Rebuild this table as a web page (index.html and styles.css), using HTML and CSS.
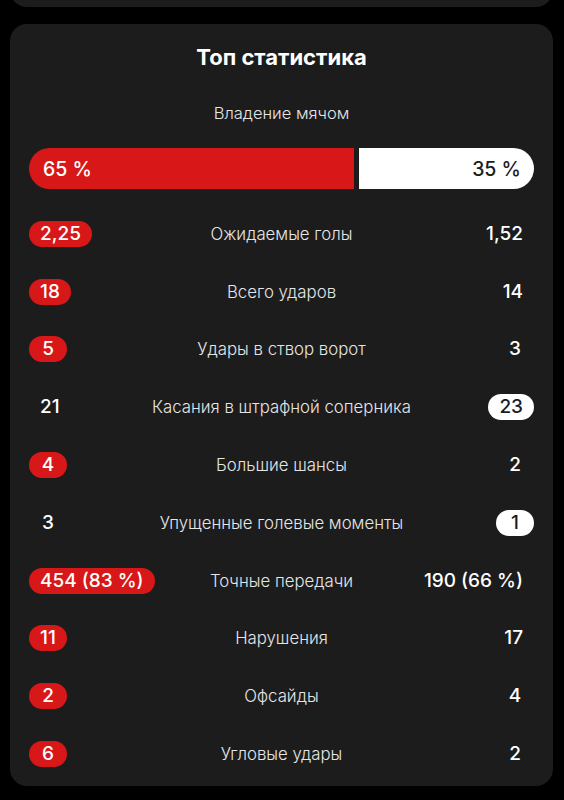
FILE: index.html
```html
<!DOCTYPE html>
<html lang="ru">
<head>
    <meta charset="UTF-8">
    <meta name="viewport" content="width=device-width, initial-scale=1.0">
    <title>Топ статистика</title>
    <link rel="stylesheet" href="styles.css">
</head>
<body>
    <div class="page">
        <!-- previous card, mostly scrolled away -->
        <div class="card prev-card"></div>

        <div class="card stats">
            <h2 class="title">Топ статистика</h2>

            <div class="possession-label">Владение мячом</div>
            <div class="possession">
                <div class="side home" style="flex-grow: 65"><span>65 %</span></div>
                <div class="side away" style="flex-grow: 35"><span>35 %</span></div>
            </div>

            <div class="row">
                <span class="val home win">2,25</span>
                <span class="label">Ожидаемые голы</span>
                <span class="val away">1,52</span>
            </div>
            <div class="row">
                <span class="val home win">18</span>
                <span class="label">Всего ударов</span>
                <span class="val away">14</span>
            </div>
            <div class="row">
                <span class="val home win">5</span>
                <span class="label">Удары в створ ворот</span>
                <span class="val away">3</span>
            </div>
            <div class="row">
                <span class="val home">21</span>
                <span class="label">Касания в штрафной соперника</span>
                <span class="val away win">23</span>
            </div>
            <div class="row">
                <span class="val home win">4</span>
                <span class="label">Большие шансы</span>
                <span class="val away">2</span>
            </div>
            <div class="row">
                <span class="val home">3</span>
                <span class="label">Упущенные голевые моменты</span>
                <span class="val away win">1</span>
            </div>
            <div class="row">
                <span class="val home win">454 (83 %)</span>
                <span class="label">Точные передачи</span>
                <span class="val away">190 (66 %)</span>
            </div>
            <div class="row">
                <span class="val home win">11</span>
                <span class="label">Нарушения</span>
                <span class="val away">17</span>
            </div>
            <div class="row">
                <span class="val home win">2</span>
                <span class="label">Офсайды</span>
                <span class="val away">4</span>
            </div>
            <div class="row">
                <span class="val home win">6</span>
                <span class="label">Угловые удары</span>
                <span class="val away">2</span>
            </div>
        </div>
    </div>
</body>
</html>
```

FILE: styles.css
```css
body {
    margin: 0;
    background-color: #000;
    font-family: Inter, "Noto Sans", sans-serif;
    color: #fff;
}

.page {
    padding: 0 11px 0 10px;
}

.card {
    background-color: #1c1c1d;
    border-radius: 17px;
}

.prev-card {
    height: 40px;
    margin-top: -33px;
    margin-bottom: 17px;
}

.stats {
    padding: 20px 19px 3px 19px;
}

.title {
    margin: 0;
    font-size: 22px;
    line-height: 26px;
    font-weight: 700;
    text-align: center;
}

.possession-label {
    margin-top: 33px;
    font-size: 16.5px;
    line-height: 20px;
    font-weight: 300;
    text-align: center;
    color: #e6e6e6;
}

.possession {
    display: flex;
    gap: 5px;
    margin-top: 25px;
    margin-bottom: 16px;
    height: 41px;
}

.possession .side {
    flex-basis: 0;
    min-width: 0;
    display: flex;
    align-items: center;
    font-size: 19.5px;
    font-weight: 500;
}

.possession .home {
    background-color: #d81818;
    border-radius: 21px 0 0 21px;
}

.possession .home span {
    margin-left: 14px;
}

.possession .away {
    background-color: #fff;
    color: #1c1c1d;
    border-radius: 0 21px 21px 0;
    justify-content: flex-end;
}

.possession .away span {
    margin-right: 13px;
}

/* one stat row: home value, label, away value */
.row {
    display: grid;
    grid-template-columns: 1fr auto 1fr;
    align-items: center;
    height: 57.8px;
}

.label {
    font-size: 16.8px;
    font-weight: 300;
    color: #e6e6e6;
    text-align: center;
}

.val {
    min-width: 38px;
    box-sizing: border-box;
    padding: 0 11px;
    height: 26px;
    line-height: 26px;
    border-radius: 13px;
    font-size: 19px;
    font-weight: 500;
    text-align: center;
}

.val.home {
    justify-self: start;
}

.val.away {
    justify-self: end;
}

.val.home.win {
    background-color: #d81818;
}

.val.away.win {
    background-color: #fff;
    color: #1c1c1d;
}
```
